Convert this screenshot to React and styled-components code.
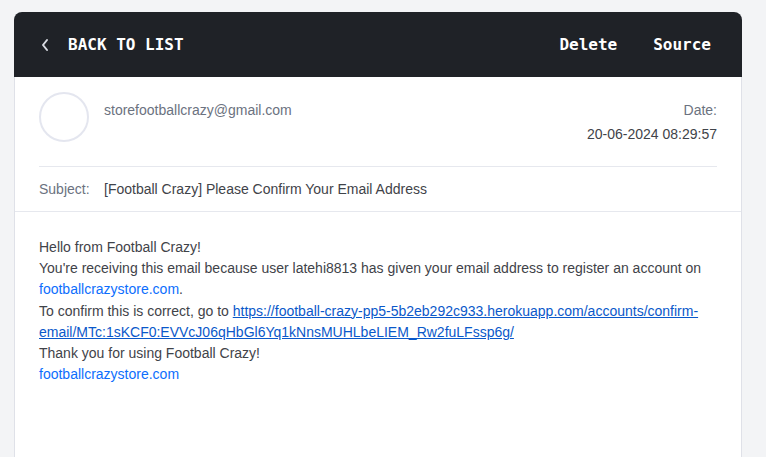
import React from "react";
import styled, { createGlobalStyle } from "styled-components";

const Global = createGlobalStyle`
  html, body { margin: 0; padding: 0; background: #f3f4f6; }
  body { font-family: "Liberation Sans", Arial, Helvetica, sans-serif; }
`;

const Page = styled.div`
  padding: 12px 24px 0 14px;
  height: 457px;
  box-sizing: border-box;
  overflow: hidden;
`;

const Card = styled.div`
  width: 728px;
  box-sizing: border-box;
  background: #fff;
  border: 1px solid #dfe1e8;
  border-top: none;
  border-radius: 8px 8px 0 0;
  min-height: 460px;
`;

const Toolbar = styled.div`
  height: 65px;
  background: #1f2227;
  border-radius: 8px 8px 0 0;
  margin: 0 -1px;
  display: flex;
  align-items: center;
  padding: 0 31px 0 26px;
  font-family: "DejaVu Sans Mono", "Liberation Mono", monospace;
  font-weight: bold;
  font-size: 16px;
  color: #fff;
`;

const BackLink = styled.div`
  display: flex;
  align-items: center;
  gap: 18px;
`;

const Actions = styled.div`
  margin-left: auto;
  display: flex;
  gap: 36px;
`;

const Meta = styled.div`
  padding: 0 24px;
`;

const MetaTop = styled.div`
  display: flex;
  padding: 15px 0 22px;
`;

const Avatar = styled.div`
  width: 50px;
  height: 50px;
  box-sizing: border-box;
  border-radius: 50%;
  border: 2px solid #e4e6ef;
  flex-shrink: 0;
`;

const Label = styled.div`
  color: #6b7280;
  font-size: 14px;
  line-height: 20px;
`;

const From = styled(Label)`
  margin: 8px 0 0 15px;
`;

const DateCol = styled.div`
  margin-left: auto;
  margin-top: 8px;
  text-align: right;
  display: flex;
  flex-direction: column;
  gap: 4px;
`;

const Value = styled.div`
  color: #3f4349;
  font-size: 14px;
  line-height: 20px;
`;

const SubjectRow = styled.div`
  display: flex;
  align-items: center;
  height: 45px;
  padding-bottom: 1px;
  box-sizing: border-box;
  border-top: 1px solid #e6e8ee;
`;

const SubjectLabel = styled(Label)`
  width: 65px;
`;

const Body = styled.div`
  border-top: 1px solid #e6e8ee;
  padding: 25px 24px;
  font-size: 14px;
  line-height: 21.2px;
  color: #3f4349;
`;

const Plain = styled.a`
  color: #0d6efd;
  text-decoration: none;
`;

const Under = styled.a`
  color: #0a58ca;
  text-decoration: underline;
`;

export default function App() {
  return (
    <>
      <Global />
      <Page>
        <Card>
          <Toolbar>
            <BackLink>
              <svg width="10" height="14" viewBox="0 0 10 14">
                <path d="M7 2 L3 7 L7 12" stroke="#d8dbe2" strokeWidth="2" fill="none" strokeLinecap="round" strokeLinejoin="round" />
              </svg>
              <span>BACK TO LIST</span>
            </BackLink>
            <Actions>
              <span>Delete</span>
              <span>Source</span>
            </Actions>
          </Toolbar>
          <Meta>
            <MetaTop>
              <Avatar />
              <From>storefootballcrazy@gmail.com</From>
              <DateCol>
                <Label>Date:</Label>
                <Value>20-06-2024 08:29:57</Value>
              </DateCol>
            </MetaTop>
            <SubjectRow>
              <SubjectLabel>Subject:</SubjectLabel>
              <Value>[Football Crazy] Please Confirm Your Email Address</Value>
            </SubjectRow>
          </Meta>
          <Body>
            Hello from Football Crazy!
            <br />
            You're receiving this email because user latehi8813 has given your email address to register an account on{" "}
            <Plain href="#">footballcrazystore.com</Plain>.
            <br />
            To confirm this is correct, go to{" "}
            <Under href="#">
              https://football-crazy-pp5-5b2eb292c933.herokuapp.com/accounts/confirm-email/MTc:1sKCF0:EVVcJ06qHbGl6Yq1kNnsMUHLbeLIEM_Rw2fuLFssp6g/
            </Under>
            <br />
            Thank you for using Football Crazy!
            <br />
            <Plain href="#">footballcrazystore.com</Plain>
          </Body>
        </Card>
      </Page>
    </>
  );
}
